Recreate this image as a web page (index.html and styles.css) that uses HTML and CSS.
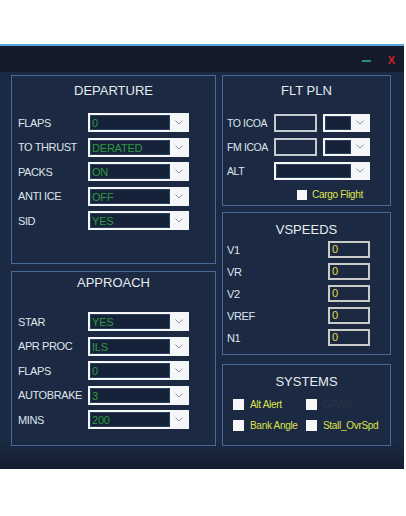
FILE: index.html
```html
<!DOCTYPE html>
<html>
<head>
<meta charset="utf-8">
<link rel="stylesheet" href="styles.css">
</head>
<body>
<div class="window">
  <div class="titlebar">
    <span class="min"></span>
    <span class="close">X</span>
  </div>
  <div class="main">
    <div class="col col-left">
      <section class="panel dep">
        <h2 class="ptitle">DEPARTURE</h2>
        <div class="rows">
          <div class="row"><span class="lbl">FLAPS</span><div class="sel"><span class="val">0</span><span class="arr"><svg width="8" height="5" viewBox="0 0 8 5"><polyline points="0.5,0.5 4,4 7.5,0.5" fill="none" stroke="#8795a6" stroke-width="1"/></svg></span></div></div>
          <div class="row"><span class="lbl">TO THRUST</span><div class="sel"><span class="val">DERATED</span><span class="arr"><svg width="8" height="5" viewBox="0 0 8 5"><polyline points="0.5,0.5 4,4 7.5,0.5" fill="none" stroke="#8795a6" stroke-width="1"/></svg></span></div></div>
          <div class="row"><span class="lbl">PACKS</span><div class="sel"><span class="val">ON</span><span class="arr"><svg width="8" height="5" viewBox="0 0 8 5"><polyline points="0.5,0.5 4,4 7.5,0.5" fill="none" stroke="#8795a6" stroke-width="1"/></svg></span></div></div>
          <div class="row"><span class="lbl">ANTI ICE</span><div class="sel"><span class="val">OFF</span><span class="arr"><svg width="8" height="5" viewBox="0 0 8 5"><polyline points="0.5,0.5 4,4 7.5,0.5" fill="none" stroke="#8795a6" stroke-width="1"/></svg></span></div></div>
          <div class="row"><span class="lbl">SID</span><div class="sel"><span class="val">YES</span><span class="arr"><svg width="8" height="5" viewBox="0 0 8 5"><polyline points="0.5,0.5 4,4 7.5,0.5" fill="none" stroke="#8795a6" stroke-width="1"/></svg></span></div></div>
        </div>
      </section>
      <section class="panel app">
        <h2 class="ptitle">APPROACH</h2>
        <div class="rows">
          <div class="row"><span class="lbl">STAR</span><div class="sel"><span class="val">YES</span><span class="arr"><svg width="8" height="5" viewBox="0 0 8 5"><polyline points="0.5,0.5 4,4 7.5,0.5" fill="none" stroke="#8795a6" stroke-width="1"/></svg></span></div></div>
          <div class="row"><span class="lbl">APR PROC</span><div class="sel"><span class="val">ILS</span><span class="arr"><svg width="8" height="5" viewBox="0 0 8 5"><polyline points="0.5,0.5 4,4 7.5,0.5" fill="none" stroke="#8795a6" stroke-width="1"/></svg></span></div></div>
          <div class="row"><span class="lbl">FLAPS</span><div class="sel"><span class="val">0</span><span class="arr"><svg width="8" height="5" viewBox="0 0 8 5"><polyline points="0.5,0.5 4,4 7.5,0.5" fill="none" stroke="#8795a6" stroke-width="1"/></svg></span></div></div>
          <div class="row"><span class="lbl">AUTOBRAKE</span><div class="sel"><span class="val">3</span><span class="arr"><svg width="8" height="5" viewBox="0 0 8 5"><polyline points="0.5,0.5 4,4 7.5,0.5" fill="none" stroke="#8795a6" stroke-width="1"/></svg></span></div></div>
          <div class="row"><span class="lbl">MINS</span><div class="sel"><span class="val">200</span><span class="arr"><svg width="8" height="5" viewBox="0 0 8 5"><polyline points="0.5,0.5 4,4 7.5,0.5" fill="none" stroke="#8795a6" stroke-width="1"/></svg></span></div></div>
        </div>
      </section>
    </div>
    <div class="col col-right">
      <section class="panel flt">
        <h2 class="ptitle">FLT PLN</h2>
        <div class="rows frows">
          <div class="row"><span class="lbl flbl">TO ICOA</span><div class="tbox"></div><div class="sel sel-s"><span class="val"></span><span class="arr"><svg width="8" height="5" viewBox="0 0 8 5"><polyline points="0.5,0.5 4,4 7.5,0.5" fill="none" stroke="#8795a6" stroke-width="1"/></svg></span></div></div>
          <div class="row"><span class="lbl flbl">FM ICOA</span><div class="tbox"></div><div class="sel sel-s"><span class="val"></span><span class="arr"><svg width="8" height="5" viewBox="0 0 8 5"><polyline points="0.5,0.5 4,4 7.5,0.5" fill="none" stroke="#8795a6" stroke-width="1"/></svg></span></div></div>
          <div class="row"><span class="lbl flbl">ALT</span><div class="sel sel-w"><span class="val"></span><span class="arr"><svg width="8" height="5" viewBox="0 0 8 5"><polyline points="0.5,0.5 4,4 7.5,0.5" fill="none" stroke="#8795a6" stroke-width="1"/></svg></span></div></div>
        </div>
        <div class="cargo"><span class="cb"></span><span class="cblbl">Cargo Flight</span></div>
      </section>
      <section class="panel vsp">
        <h2 class="ptitle">VSPEEDS</h2>
        <div class="vrows">
          <div class="vrow"><span class="lbl">V1</span><div class="vin">0</div></div>
          <div class="vrow"><span class="lbl">VR</span><div class="vin">0</div></div>
          <div class="vrow"><span class="lbl">V2</span><div class="vin">0</div></div>
          <div class="vrow"><span class="lbl">VREF</span><div class="vin">0</div></div>
          <div class="vrow"><span class="lbl">N1</span><div class="vin">0</div></div>
        </div>
      </section>
      <section class="panel sys">
        <h2 class="ptitle">SYSTEMS</h2>
        <div class="checks">
          <div class="chk"><span class="cb"></span><span class="cblbl">Alt Alert</span></div>
          <div class="chk"><span class="cb"></span><span class="cblbl off">GPWS</span></div>
          <div class="chk"><span class="cb"></span><span class="cblbl">Bank Angle</span></div>
          <div class="chk"><span class="cb"></span><span class="cblbl">Stall_OvrSpd</span></div>
        </div>
      </section>
    </div>
  </div>
</div>
</body>
</html>
```
FILE: styles.css
```css
html, body {
  margin: 0;
  padding: 0;
  background: #ffffff;
}
body {
  font-family: "Liberation Sans", Arial, sans-serif;
  padding-top: 44px;
}
.window {
  width: 404px;
  height: 425px;
  border-top: 2px solid #5aa6dc;
  box-sizing: border-box;
  background: linear-gradient(#1b2942 0, #1b2942 396px, #141d2e 425px);
  display: flex;
  flex-direction: column;
}
.titlebar {
  height: 26px;
  background: #141c2b;
  display: flex;
  align-items: center;
  justify-content: flex-end;
  padding-right: 9px;
  gap: 17px;
  flex: none;
}
.min {
  width: 9px;
  height: 2px;
  background: #2f8a86;
  margin-top: 4px;
}
.close {
  color: #d0202c;
  font-size: 11px;
  font-weight: bold;
  line-height: 1;
  margin-top: 2px;
}
.main {
  display: flex;
  gap: 6px;
  padding: 3px 0 0 11px;
}
.col {
  display: flex;
  flex-direction: column;
}
.col-left {
  width: 205px;
  gap: 7px;
}
.col-right {
  width: 169px;
}
.panel {
  border: 1px solid #4a6799;
  box-sizing: border-box;
}
.dep { height: 189px; }
.app { height: 175px; }
.flt { height: 131px; }
.vsp { height: 143px; margin-top: 6px; }
.sys { height: 82px; margin-top: 9px; }
.ptitle {
  margin: 0;
  font-weight: normal;
  font-size: 13px;
  line-height: 16px;
  color: #e6ebf0;
  text-align: center;
  padding-top: 7px;
}
.app .ptitle { padding-top: 3px; }
.vsp .ptitle { padding-top: 9px; }
.sys .ptitle { padding-top: 9px; }
.rows {
  display: flex;
  flex-direction: column;
  gap: 5.5px;
  padding-left: 6px;
  margin-top: 14px;
}
.app .rows { margin-top: 21px; }
.row {
  display: flex;
  align-items: center;
  height: 19px;
}
.lbl {
  font-size: 11px;
  color: #dfe5ec;
  width: 70px;
  flex: none;
  white-space: nowrap;
  letter-spacing: -0.4px;
}
.sel {
  width: 101px;
  height: 19px;
  box-sizing: border-box;
  border: 2px solid #f4f6f8;
  background: #f4f6f8;
  display: flex;
}
.val {
  flex: 1;
  background: #15223a;
  color: #2d9a3c;
  font-size: 11px;
  line-height: 15px;
  padding-left: 1px;
  overflow: hidden;
  border: 1px solid #28405c;
  box-sizing: border-box;
  letter-spacing: -0.2px;
}
.arr {
  width: 17px;
  flex: none;
  display: flex;
  align-items: center;
  justify-content: center;
}
.frows {
  padding-left: 4px;
  gap: 5px;
}
.flbl {
  width: 47px;
  font-size: 10.5px;
}
.tbox {
  width: 43px;
  height: 18px;
  box-sizing: border-box;
  border: 2px solid #c6cbd2;
  margin-right: 6px;
}
.sel-s { width: 47px; height: 18px; }
.sel-w { width: 96px; height: 18px; }
.cargo {
  display: flex;
  align-items: center;
  padding-left: 74px;
  margin-top: 9px;
}
.cb {
  width: 10px;
  height: 10px;
  background: #f7f7f7;
  flex: none;
}
.cblbl {
  font-size: 10px;
  color: #dfe34a;
  margin-left: 5px;
  letter-spacing: -0.3px;
  white-space: nowrap;
}
.cblbl.off { color: #2a3347; }
.vrows {
  display: flex;
  flex-direction: column;
  gap: 5px;
  padding: 3px 20px 0 4px;
}
.vrow {
  display: flex;
  justify-content: space-between;
  align-items: center;
  height: 17px;
}
.vin {
  width: 42px;
  height: 17px;
  box-sizing: border-box;
  border: 2px solid #c9ccc8;
  color: #e2dc3a;
  font-size: 11px;
  line-height: 13px;
  padding-left: 2px;
}
.checks {
  display: grid;
  grid-template-columns: 73px 80px;
  row-gap: 9px;
  padding-left: 10px;
  margin-top: 8px;
}
.chk {
  display: flex;
  align-items: center;
  height: 12px;
}
.chk .cb { width: 11px; height: 11px; }
.chk .cblbl { margin-left: 6px; }
```
